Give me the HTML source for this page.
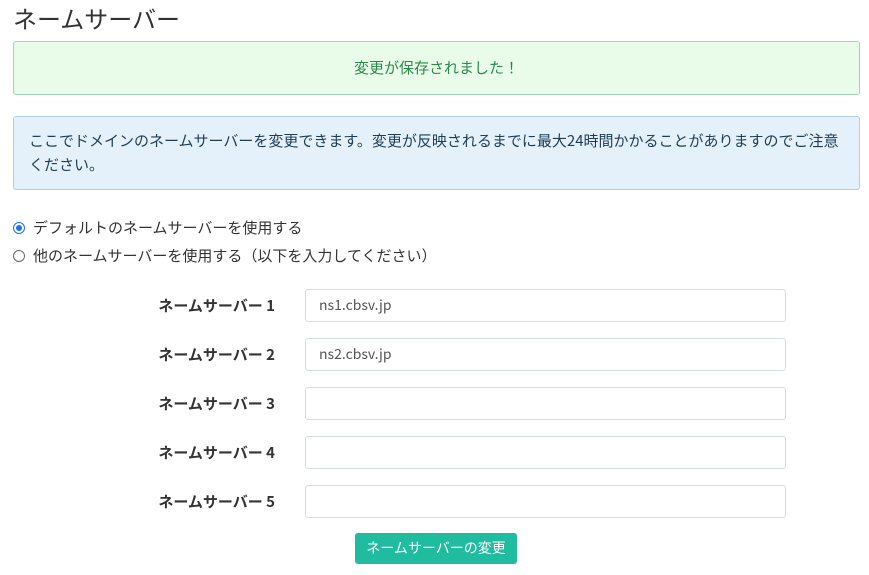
<!DOCTYPE html><html><head><meta charset="utf-8"><style>
body{margin:0;width:869px;height:575px;background:#fff;font-family:"Noto Sans CJK JP","Liberation Sans",sans-serif;color:#333;position:relative;overflow:hidden}
.a{position:absolute}
h1{position:absolute;left:13px;top:1px;margin:0;font-weight:400;font-size:24px;line-height:34px;color:#333}
.g{left:13px;top:41px;width:845px;height:52px;background:#e9fce9;border:1px solid #9fd4b5;border-radius:3px;color:#2a8a4a;font-size:15px;text-align:center;line-height:52px}
.b{left:13px;top:116px;width:816px;height:48px;padding:12px 14px 12px 15px;background:#e4f1fa;border:1px solid #b5cfe0;border-radius:3px;color:#1e3d55;font-size:15px;line-height:24px}
.r{left:13px;font-size:15px;color:#333;line-height:20px}
.r i{display:inline-block;width:10px;height:10px;border:1px solid #666;border-radius:50%;vertical-align:-1px;margin-right:8px;position:relative}
.r i.on{border-color:#1a73e8;}
.r i.on:after{content:"";position:absolute;left:2px;top:2px;width:6px;height:6px;border-radius:50%;background:#1a73e8}
.l{left:120px;width:155px;text-align:right;font-weight:700;font-size:15px;color:#333;line-height:20px}
.in{left:305px;border:1px solid #d5dde2;border-radius:3px;font-size:14px;color:#555;line-height:31px;padding-left:13px;box-sizing:border-box;width:481px;height:33px}
.btn{left:355px;top:533px;width:162px;height:31px;background:#20bca0;border-radius:3px;color:#fff;font-size:14px;text-align:center;line-height:31px}
</style></head><body>
<h1>ネームサーバー</h1>
<div class="a g">変更が保存されました！</div>
<div class="a b">ここでドメインのネームサーバーを変更できます。変更が反映されるまでに最大24時間かかることがありますのでご注意<br>ください。</div>
<div class="a r" style="top:218px"><i class="on"></i>デフォルトのネームサーバーを使用する</div>
<div class="a r" style="top:246px"><i></i>他のネームサーバーを使用する（以下を入力してください）</div>
<div class="a l" style="top:296px">ネームサーバー 1</div><div class="a in" style="top:289px">ns1.cbsv.jp</div>
<div class="a l" style="top:345px">ネームサーバー 2</div><div class="a in" style="top:338px">ns2.cbsv.jp</div>
<div class="a l" style="top:394px">ネームサーバー 3</div><div class="a in" style="top:387px"></div>
<div class="a l" style="top:443px">ネームサーバー 4</div><div class="a in" style="top:436px"></div>
<div class="a l" style="top:492px">ネームサーバー 5</div><div class="a in" style="top:485px"></div>
<div class="a btn">ネームサーバーの変更</div>
</body></html>
